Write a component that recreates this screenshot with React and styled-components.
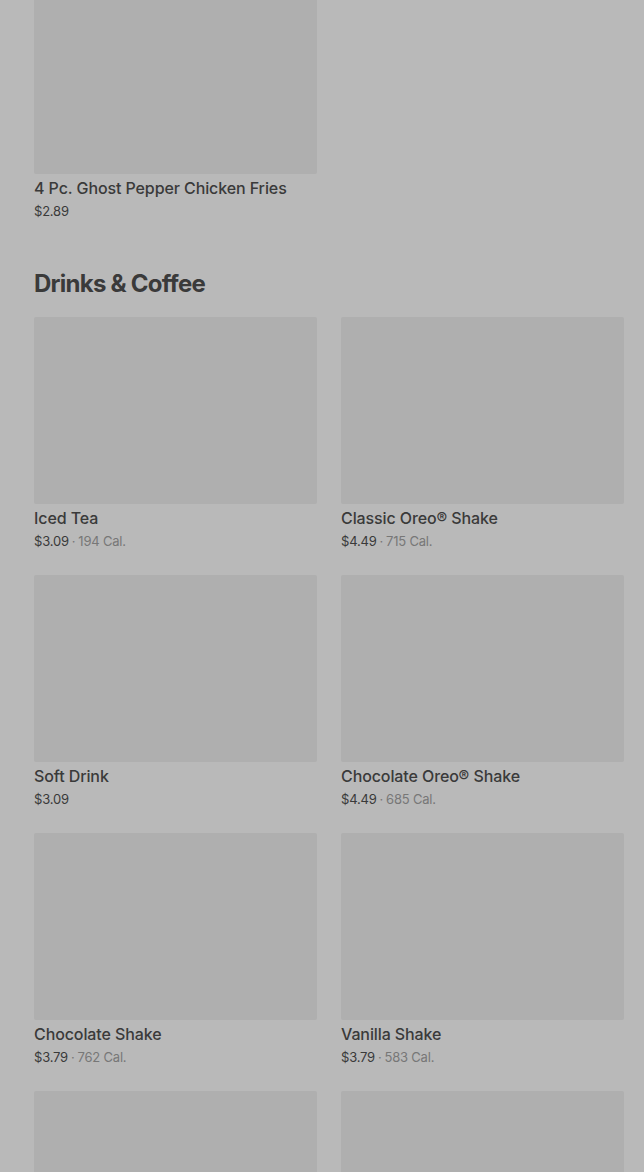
import React from 'react';
import styled, { createGlobalStyle } from 'styled-components';

const GlobalStyle = createGlobalStyle`
  html, body {
    margin: 0;
    padding: 0;
    background: #b9b9b9;
    overflow: hidden;
  }
  body {
    font-family: Inter, "Liberation Sans", sans-serif;
    color: #3a3a3a;
  }
`;

const Page = styled.div`
  margin-top: -13px;
  padding: 0 20px 0 34px;
  display: flex;
  flex-direction: column;
`;

const Section = styled.section`
  display: flex;
  flex-direction: column;
  margin-bottom: ${(props) => props.$spacing || 0}px;
`;

const SectionTitle = styled.h2`
  margin: 0 0 17px;
  font-size: 24px;
  line-height: 32px;
  font-weight: 700;
  letter-spacing: -0.75px;
  color: #3a3a3a;
`;

const Grid = styled.div`
  display: grid;
  grid-template-columns: 283px 283px;
  column-gap: 24px;
  row-gap: 25px;
`;

const Card = styled.div`
  display: flex;
  flex-direction: column;
`;

const ImageBox = styled.div`
  height: 187px;
  background: #afafaf;
  border-radius: 2px;
`;

const ItemName = styled.div`
  margin-top: 4px;
  font-size: 16px;
  line-height: 20px;
  font-weight: 500;
  letter-spacing: -0.1px;
  color: #3a3a3a;
`;

const PriceRow = styled.div`
  margin-top: 4px;
  font-size: 13px;
  line-height: 18px;
  letter-spacing: -0.2px;
  color: #3a3a3a;
`;

const Dot = styled.span`
  margin: 0 3px;
  color: #777;
`;

const Calories = styled.span`
  color: #777;
`;

const firstItems = [{ name: '4 Pc. Ghost Pepper Chicken Fries', price: '$2.89' }];

const drinks = [
  { name: 'Iced Tea', price: '$3.09', cal: '194 Cal.' },
  { name: 'Classic Oreo® Shake', price: '$4.49', cal: '715 Cal.' },
  { name: 'Soft Drink', price: '$3.09' },
  { name: 'Chocolate Oreo® Shake', price: '$4.49', cal: '685 Cal.' },
  { name: 'Chocolate Shake', price: '$3.79', cal: '762 Cal.' },
  { name: 'Vanilla Shake', price: '$3.79', cal: '583 Cal.' },
  { name: 'Hot Coffee', price: '$1.99' },
  { name: 'Iced Coffee', price: '$2.49' },
];

function MenuItem({ item }) {
  return (
    <Card>
      <ImageBox />
      <ItemName>{item.name}</ItemName>
      <PriceRow>
        {item.price}
        {item.cal && (
          <>
            <Dot>·</Dot>
            <Calories>{item.cal}</Calories>
          </>
        )}
      </PriceRow>
    </Card>
  );
}

export default function App() {
  return (
    <>
      <GlobalStyle />
      <Page>
        <Section $spacing={48}>
          <Grid>
            {firstItems.map((item) => (
              <MenuItem key={item.name} item={item} />
            ))}
          </Grid>
        </Section>
        <Section>
          <SectionTitle>Drinks &amp; Coffee</SectionTitle>
          <Grid>
            {drinks.map((item) => (
              <MenuItem key={item.name} item={item} />
            ))}
          </Grid>
        </Section>
      </Page>
    </>
  );
}
